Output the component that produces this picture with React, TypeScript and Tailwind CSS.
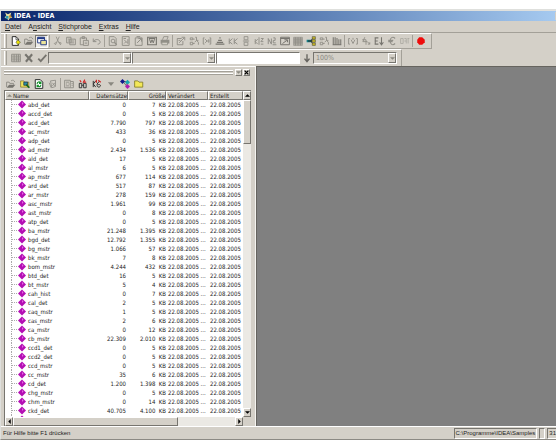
import React from "react";

type Row = [string, string, string];

const rows: Row[] = [
  ["abd_det", "0", "7"], ["accd_det", "0", "5"], ["acd_det", "7.790", "797"], ["ac_mstr", "433", "36"],
  ["adp_det", "0", "5"], ["ad_mstr", "2.434", "1.536"], ["ald_det", "17", "5"], ["al_mstr", "6", "5"],
  ["ap_mstr", "677", "114"], ["ard_det", "517", "87"], ["ar_mstr", "278", "159"], ["asc_mstr", "1.961", "99"],
  ["ast_mstr", "0", "8"], ["atp_det", "0", "5"], ["ba_mstr", "21.248", "1.395"], ["bgd_det", "12.792", "1.355"],
  ["bg_mstr", "1.066", "57"], ["bk_mstr", "7", "8"], ["bom_mstr", "4.244", "432"], ["btd_det", "16", "5"],
  ["bt_mstr", "5", "4"], ["cah_hist", "0", "7"], ["cal_det", "2", "5"], ["caq_mstr", "1", "5"],
  ["cas_mstr", "2", "6"], ["ca_mstr", "0", "12"], ["cb_mstr", "22.309", "2.010"], ["ccd1_det", "0", "5"],
  ["ccd2_det", "0", "5"], ["ccd_mstr", "0", "5"], ["cc_mstr", "35", "6"], ["cd_det", "1.200", "1.398"],
  ["chg_mstr", "0", "5"], ["chm_mstr", "0", "14"], ["ckd_det", "40.705", "4.100"], ["ck_mstr", "986", "48"],
];

const raised = "border border-t-white border-l-white border-r-[#77756f] border-b-[#77756f] bg-[#d4d0c8]";
const sunken = "border border-t-[#77756f] border-l-[#77756f] border-r-white border-b-white";

const G = "#918f88";

const icons: Record<string, React.ReactNode> = {
  new: <><path d="M2 1h6l4 4v10H2z" fill="#fff" stroke="#222" strokeWidth="1.5" /><path d="M8 1v5h4" fill="none" stroke="#222" /><path d="M11 6l4 4-4 4-3-4z" fill="#e8e000" stroke="#554" /></>,
  open: <><path d="M1 13V5h4l1 2h6v2" fill="none" stroke={G} strokeWidth="1.6" /><path d="M1 14l4-5h10l-4 5z" fill="#77756f" /><path d="M8 3c3-2 5-1 6 2" fill="none" stroke={G} strokeWidth="1.4" /></>,
  panes: <><path d="M1 2h11v9H1z" fill="#fff" stroke="#223a86" strokeWidth="1.5" /><path d="M1 2h11v3H1z" fill="#223a86" /><path d="M6 7h9v7H6z" fill="#ece59a" stroke="#223a86" strokeWidth="1.5" /></>,
  cut: <path d="M5 1l4 9M10 1L6 10M6 10l-2 4-2-2zM9 10l4 1-1 3z" fill="none" stroke={G} strokeWidth="1.3" />,
  copy: <><path d="M1 2h7v9H1z" fill="none" stroke={G} strokeWidth="1.5" /><path d="M6 5h9v9H6zM8 8h5M8 11h5M3 5h3M3 8h3" fill="none" stroke={G} strokeWidth="1.5" /></>,
  paste: <><path d="M2 3h10v11H2zM5 1h4v3H5z" fill="none" stroke={G} strokeWidth="1.5" /><path d="M7 7h8v8H7z" fill="#d4d0c8" stroke={G} strokeWidth="1.5" /><path d="M9 10h4M9 12h4" stroke={G} /></>,
  undo: <path d="M2 4v5h5M2 9c3-5 11-4 11 1 0 2-2 3-4 3" fill="none" stroke={G} strokeWidth="1.6" />,
  preview: <><path d="M2 1h8l3 3v11H2z" fill="none" stroke={G} strokeWidth="1.5" /><circle cx="8" cy="8" r="3" fill="none" stroke={G} strokeWidth="1.5" /><path d="M10 10l4 4" stroke={G} strokeWidth="2" /></>,
  find: <><path d="M2 1h11v14H2z" fill="none" stroke={G} strokeWidth="1.5" /><path d="M4 4h4M5 6l6 6M11 5v7M5 12l3-3" stroke={G} strokeWidth="1.5" fill="none" /></>,
  export: <><path d="M2 3h11v12H2z" fill="none" stroke={G} strokeWidth="1.5" /><path d="M5 11l6-6M7 4h5v5M4 1h6" stroke={G} strokeWidth="1.6" fill="none" /></>,
  word: <><path d="M1 2h14v12H1z" fill="none" stroke="#77756f" strokeWidth="1.8" /><path d="M4 5l2 6 2-5 2 5 2-6M3 4h10" stroke="#77756f" strokeWidth="1.6" fill="none" /></>,
  print: <><path d="M4 6l2-5h7l-2 5" fill="none" stroke={G} strokeWidth="1.4" /><path d="M1 6h14v6H1z" fill={G} /><path d="M3 10h9v4H3z" fill="#d4d0c8" stroke={G} strokeWidth="1.3" /></>,
  extract: <path d="M2 4h7M2 4v10h9V8M5 11l8-8M9 2h5v5M4 7h3" fill="none" stroke={G} strokeWidth="1.5" />,
  tree: <path d="M2 3h4v3H2zM2 10h4v4H2zM10 2h2v5h3M9 10l3-3 3 3v4M6 5h3M6 12h3" fill="none" stroke={G} strokeWidth="1.5" />,
  bracket: <path d="M4 3H2v10h2M12 3h2v10h-2M5 5l3 3-3 3M8 8h4M11 5v6" fill="none" stroke={G} strokeWidth="1.5" />,
  sum: <path d="M1 13h14M3 10h10M8 2v2M5 7h6" fill="none" stroke="#77756f" strokeWidth="2" />,
  kk: <path d="M2 4v9M7 4L2 9l5 4M10 4v9M15 4l-5 5 5 4" fill="none" stroke={G} strokeWidth="1.6" />,
  split: <path d="M5 1h6v5H5zM5 10h6v5H5zM3 8h10" fill="none" stroke={G} strokeWidth="1.4" />,
  kz: <path d="M2 5v8M6 5L2 9l4 4M8 2v12M11 4h4l-4 5h4M11 13h4" fill="none" stroke={G} strokeWidth="1.5" />,
  nz: <path d="M2 13V4l5 9V4M10 3h3v4h-3v4h4M9 14h6" fill="none" stroke={G} strokeWidth="1.6" />,
  chartline: <><path d="M1 2h14v12H1zM1 4h14" fill="none" stroke="#77756f" strokeWidth="1.6" /><path d="M4 12l7-5M7 6h5v4" fill="none" stroke="#77756f" strokeWidth="1.6" /></>,
  grid: <><path d="M1 2h14v13H1z" fill="#b0ada5" stroke={G} /><path d="M1 5h14M1 8h14M1 11h14M4 2v13M8 2v13M12 2v13" stroke={G} strokeWidth="1.4" /></>,
  link: <><path d="M1 6h8v4H1z" fill="#16838c" /><path d="M3 8h6M8 8l3-5M8 8l3 5" stroke="#222" strokeWidth="1.5" /><path d="M10 1h5v4h-5zM10 6h5v4h-5zM10 11h5v4h-5z" fill="#c8b820" stroke="#554" /></>,
  bars: <path d="M2 2v11M5 2v11M8 3v10M11 5v8M14 5v8M1 14h14" fill="none" stroke="#77756f" strokeWidth="1.7" />,
  vbox: <path d="M3 4H1v9h2M13 4h2v9h-2M5 6l3 6 3-6M8 3v3" fill="none" stroke={G} strokeWidth="1.5" />,
  branch: <path d="M2 6h6M6 2L3 9h7M8 6v8M10 9l4 4M11 13h3v-3" fill="none" stroke={G} strokeWidth="1.5" />,
  sort: <path d="M1 3h6M1 8h5M1 13h6M2 3v10M12 2v11M9 10l3 4 3-4" fill="none" stroke="#77756f" strokeWidth="1.7" />,
  euro: <path d="M13 4c-4-4-8-1-8 4s4 8 8 4M2 7h8M2 9h7" fill="none" stroke={G} strokeWidth="1.7" />,
  fields: <path d="M1 4h4v8H1zM7 4h3v8M7 8h3M12 4h3M13 4v8" fill="none" stroke="#aaa7a0" strokeWidth="1.3" />,
  record: <path d="M5 2h5l4 4v4l-4 4H5l-3-4V6z" fill="#ee0b0b" />,
  calc: <><path d="M1 2h14v12H1z" fill="none" stroke={G} strokeWidth="1.5" /><path d="M1 5h14M1 8h14M1 11h14M5 2v12M9 2v12M12 2v12" stroke={G} strokeWidth="1.5" /></>,
  cross: <path d="M2 2l11 12M13 2L3 14" stroke="#77756f" strokeWidth="3.4" />,
  check: <path d="M2 9l4 4 9-10" stroke="#77756f" strokeWidth="3" fill="none" />,
  down: <path d="M8 2v11M4 9l4 5 4-5" stroke="#66645f" strokeWidth="2.2" fill="none" />,
  import: <><path d="M1 3h5l1 2h7v8H1z" fill="#f1e45c" stroke="#666022" /><path d="M6 5h6v5H6z" fill="#2b8fa8" stroke="#124" /><path d="M10 9l5 5" stroke="#17651b" strokeWidth="2.5" /></>,
  refresh: <><path d="M2 1h8l4 4v10H2z" fill="#fff" stroke="#222" strokeWidth="1.5" /><path d="M5 8c0-4 4-4 5-2M11 4v3H8M11 9c0 4-4 4-5 2M5 13v-3h3" fill="none" stroke="#14902a" strokeWidth="1.8" /></>,
  cube: <path d="M4 3l8-1v10l-6 2zM2 6l3 8M7 6l4 5M11 6l-4 5" fill="none" stroke={G} strokeWidth="1.4" />,
  report: <path d="M1 2h9v12H1zM10 4h5v10h-5M3 5h5M3 8h2M7 8h2M3 11h5M12 7h2M12 10h2" fill="none" stroke={G} strokeWidth="1.5" />,
  chain: <><path d="M2 7h4v7H2zM9 7h4v7H9zM6 10h3" fill="none" stroke="#333" strokeWidth="1.5" /><path d="M3 2l2 3M11 1l-3 5M8 5h5" stroke="#d02525" strokeWidth="1.8" /></>,
  tools: <><path d="M2 3v10M6 3l-4 5 4 5M12 4c-5 2-5 9-1 9 4-1 3-5-1-4" fill="none" stroke="#333" strokeWidth="1.6" /><path d="M7 1v5M10 2l4 3" stroke="#d02525" strokeWidth="2" /></>,
  drop: <path d="M3 5h10l-5 6z" fill="#8a8880" />,
  nodes: <><path d="M4 4h7v8M5 4l6 8" fill="none" stroke="#333" /><path d="M4 0l4 4-4 4-4-4z" fill="#13188c" /><path d="M12 1l4 4-4 4-4-4z" fill="#1aa6ae" /><path d="M12 8l4 4-4 4-4-4z" fill="#b21cb2" /></>,
  folder: <path d="M1 13V3h5l2 2h6v8z" fill="#f3e858" stroke="#77701c" strokeWidth="1.2" />,
};

function Icon({ name }: { name: string }) {
  return <svg viewBox="0 0 16 16" className="size-[10px]" aria-hidden="true">{icons[name]}</svg>;
}

function ToolButton({ name, pressed = false }: { name: string; pressed?: boolean }) {
  return (
    <button type="button" aria-label={name} className={`flex h-[13px] w-[13px] shrink-0 items-center justify-center ${pressed ? `${sunken} bg-[#ebe9e4]` : ""}`}>
      <Icon name={name} />
    </button>
  );
}

function Separator() {
  return <div className="h-[12px] w-px shrink-0 bg-[#a3a098]" />;
}

function Grip() {
  return <div className="mr-[2px] h-[14px] w-[3px] shrink-0 border-x border-l-white border-r-[#a3a098]" />;
}

function Combo({ label, value = "" }: { label: string; value?: string }) {
  return (
    <div className={`flex h-3 w-[84px] shrink-0 ${sunken} bg-[#d4d0c8]`}>
      <select aria-label={label} className="min-w-0 flex-1 appearance-none bg-transparent px-[2px] text-[7px] leading-[10px] text-[#8a8880] outline-none">
        <option>{value}</option>
      </select>
      <div className={`pointer-events-none flex w-2 items-center justify-center ${raised}`}>
        <Arrow dir="down" dim />
      </div>
    </div>
  );
}

function Arrow({ dir, dim = false }: { dir: "up" | "down" | "left" | "right"; dim?: boolean }) {
  const d = { up: "M0 6l4-4 4 4z", down: "M0 2l4 4 4-4z", left: "M6 0L2 4l4 4z", right: "M2 0l4 4-4 4z" }[dir];
  return <svg viewBox="0 0 8 8" className="size-[5px] shrink-0" aria-hidden="true"><path d={d} fill={dim ? "#8a8880" : "#000"} /></svg>;
}

function ScrollButton({ dir }: { dir: "up" | "down" | "left" | "right" }) {
  return <button type="button" aria-label={`Scroll ${dir}`} className={`flex h-[9px] w-2 shrink-0 items-center justify-center ${raised}`}><Arrow dir={dir} /></button>;
}

const groups: string[][] = [
  ["cut", "copy", "paste", "undo"],
  ["preview", "find", "export", "word", "print"],
  ["extract", "tree", "bracket", "sum", "kk", "split", "kz", "nz", "chartline", "grid", "link", "tree", "bars"],
  ["vbox", "branch", "sort", "euro", "fields"],
  ["record"],
];

const menus = [["", "D", "atei"], ["A", "n", "sicht"], ["", "S", "tichprobe"], ["", "E", "xtras"], ["", "H", "ilfe"]];

const columns = ["Name", "Datensätze", "Größe", "Verändert", "Erstellt"];

function FileTable() {
  return (
    <table className="w-full table-fixed border-collapse text-[6px] leading-[9px] text-[#222]">
      <colgroup>
        <col className="w-[84px]" /><col className="w-[39px]" /><col className="w-[38px]" /><col className="w-[42px]" /><col />
      </colgroup>
      <thead>
        <tr className="h-[9px]">
          {columns.map((c, i) => (
            <th key={c} className="p-0 font-normal">
              <div className={`flex h-[9px] items-center whitespace-nowrap leading-[7px] ${raised} ${i === 1 || i === 2 ? "justify-end" : "pl-px"}`}>
                {i === 0 && <span className="mr-px"><Arrow dir="up" dim /></span>}
                {c}
              </div>
            </th>
          ))}
        </tr>
      </thead>
      <tbody>
        {rows.map(([name, count, size]) => (
          <tr key={name} className="h-[9px] whitespace-nowrap">
            <td className="p-0">
              <div className="flex h-[9px] items-center pl-[5px]">
                <svg viewBox="0 0 16 9" className="mr-[2px] h-[9px] w-4 shrink-0" aria-hidden="true">
                  <path d="M1.5 0v9M2 4.5h6" stroke="#aaa" strokeDasharray="1 1" />
                  <path d="M12 .5l4 4-4 4-4-4z" fill="#b40fb4" />
                  <path d="M12 2l1.5 1.5L12 5z" fill="#e36be3" />
                </svg>
                {name}
              </div>
            </td>
            <td className="p-0 pr-[2px] text-right">{count}</td>
            <td className="p-0 text-right">{size}&nbsp; KB</td>
            <td className="p-0 pl-[2px]">22.08.2005 ...</td>
            <td className="p-0 pl-[2px]">22.08.2005</td>
          </tr>
        ))}
      </tbody>
    </table>
  );
}

export default function App() {
  return (
    <div className="flex h-screen flex-col overflow-hidden bg-white font-['DejaVu_Sans_Condensed','DejaVu_Sans',sans-serif] text-[#222]">
      <div className="mt-[9px] mb-1 flex min-h-0 flex-1 flex-col border-t-2 border-b border-l border-[#dfe0dd] border-b-[#8c8a84] bg-[#d4d0c8]">
        <header className="flex h-[10px] shrink-0 items-center gap-px bg-linear-to-r from-[#0b246a] to-[#a6caf0] pl-[3px] text-white">
          <svg viewBox="0 0 16 16" className="size-[9px]" aria-hidden="true">
            <path d="M2 1l5 3 6-3-2 6 4 3-5 1-2 4-3-4-4-1 3-4z" fill="#e9dfa0" />
            <path d="M3 7h5v5H3z" fill="#2f9bb0" /><path d="M9 6h4v4H9z" fill="#c9902e" />
          </svg>
          <h1 className="text-[7px] leading-[10px] font-bold">IDEA - IDEA</h1>
          <span className="ml-auto h-2 w-px bg-[#d4d0c8]" />
        </header>
        <nav className="flex h-[12px] shrink-0 items-center gap-[7px] border-b border-[#a3a098] pl-1 font-['Liberation_Sans',sans-serif] text-[7px] leading-[10px]">
          {menus.map(([a, u, b]) => (
            <button key={u} type="button">{a}<u>{u}</u>{b}</button>
          ))}
        </nav>
        <div className="flex h-4 shrink-0 items-center self-start border-t border-r border-b border-t-white border-r-[#a3a098] border-b-[#a3a098] pr-1 pl-[3px]">
          <Grip />
          <ToolButton name="new" /><ToolButton name="open" /><ToolButton name="panes" pressed />
          {groups.map((g, i) => (
            <React.Fragment key={i}>
              <div className="px-px"><Separator /></div>
              {g.map((n, k) => <ToolButton key={k} name={n} />)}
            </React.Fragment>
          ))}
        </div>
        <div className="flex h-[17px] shrink-0 items-center self-start border-t border-r border-t-white border-r-[#a3a098] pr-1 pl-[3px]">
          <Grip />
          <ToolButton name="calc" /><ToolButton name="cross" /><ToolButton name="check" />
          <Combo label="Feld" />
          <Combo label="Wert" />
          <input aria-label="Suche" className={`h-3 w-[84px] bg-white ${sunken}`} />
          <ToolButton name="down" />
          <Combo label="Zoom" value="100%" />
        </div>
        <main className="flex min-h-0 flex-1">
          <aside className="flex w-[255px] shrink-0 flex-col border-t border-r border-t-white border-r-[#f4f3f0] pr-1 pl-[3px]">
            <div className="flex h-[10px] shrink-0 items-center gap-px pr-px">
              <div className="mr-px flex flex-1 flex-col gap-px">
                <span className="h-[2px] border-t border-b border-t-white border-b-[#a3a098]" />
                <span className="h-[2px] border-t border-b border-t-white border-b-[#a3a098]" />
              </div>
              <button type="button" aria-label="Menü" className={`flex size-[7px] items-center justify-center ${raised}`}><Arrow dir="down" dim /></button>
              <button type="button" aria-label="Schließen" className={`flex size-[7px] items-center justify-center ${raised}`}>
                <svg viewBox="0 0 8 8" className="size-[5px]" aria-hidden="true"><path d="M1 1l6 6M7 1L1 7" stroke="#000" strokeWidth="2" /></svg>
              </button>
            </div>
            <div className="flex h-[13px] shrink-0 items-center gap-px">
              <ToolButton name="open" /><ToolButton name="import" /><ToolButton name="refresh" /><ToolButton name="cube" />
              <Separator />
              <ToolButton name="report" /><ToolButton name="chain" /><ToolButton name="tools" /><ToolButton name="drop" />
              <ToolButton name="nodes" /><ToolButton name="folder" />
            </div>
            <div className="flex min-h-0 flex-1 flex-col border-t border-l border-[#77756f] bg-white">
              <div className="flex min-h-0 flex-1">
                <div className="min-w-0 flex-1 overflow-hidden"><FileTable /></div>
                <div className="flex w-2 shrink-0 flex-col bg-[#ebe9e4]">
                  <ScrollButton dir="up" />
                  <div className={`h-[44px] ${raised}`} />
                  <div className="flex-1" />
                  <ScrollButton dir="down" />
                </div>
              </div>
              <div className="flex h-[9px] shrink-0 bg-[#d4d0c8]">
                <div className="flex flex-1 bg-[#ebe9e4]">
                  <ScrollButton dir="left" />
                  <div className={`w-[165px] ${raised}`} />
                  <div className="flex-1" />
                  <ScrollButton dir="right" />
                </div>
                <div className="w-2" />
              </div>
            </div>
          </aside>
          <section className="flex-1 border-t border-l border-[#66645f] bg-[#808080]" aria-label="Arbeitsbereich" />
        </main>
        <footer className="flex h-[13px] shrink-0 items-center border-t border-white pl-[2px] font-['Liberation_Sans',sans-serif] text-[6px] leading-[9px]">
          <span className="flex-1">Für Hilfe bitte F1 drücken</span>
          <span className={`mr-[2px] px-px ${sunken}`}>C:\Programme\IDEA\Samples</span>
          <span className={`mr-[2px] h-[11px] w-[6px] ${sunken}`} />
          <span className="border-y border-l border-t-[#77756f] border-b-white border-l-[#77756f] pl-px whitespace-nowrap">31</span>
        </footer>
      </div>
    </div>
  );
}
